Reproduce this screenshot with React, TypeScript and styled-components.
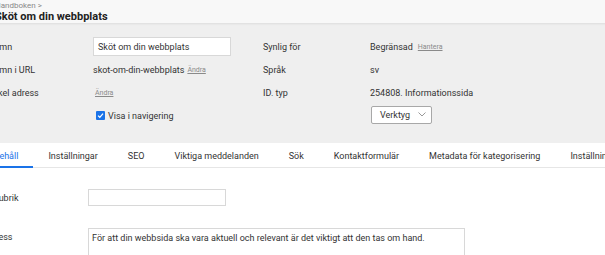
import React from "react";
import styled, { createGlobalStyle } from "styled-components";

const Global = createGlobalStyle`
  html, body { margin: 0; padding: 0; background: #ffffff; overflow: hidden; }
  body { font-family: Roboto, "Liberation Sans", sans-serif; color: #333; }
`;

const Viewport = styled.div`
  width: 605px;
  height: 255px;
  overflow: hidden;
  background: #fff;
`;

const Page = styled.div`
  width: 700px;
  margin-left: -40px;
`;

const Header = styled.header`
  height: 23px;
  padding-left: 35px;
  background: #f8f8f8;
  box-shadow: 0 1px 2px rgba(0, 0, 0, 0.08);
  position: relative;
  z-index: 1;
  display: flex;
  flex-direction: column;
`;

const Crumb = styled.div`
  font-size: 8px;
  line-height: 10px;
  color: #888;
  margin-top: 1px;
`;

const Title = styled.h1`
  margin: 0;
  font-size: 11px;
  line-height: 11px;
  font-weight: 700;
  color: #222;
`;

const Panel = styled.section`
  background: #efefef;
  height: 120px;
  padding: 12px 0 0 28px;
  box-sizing: border-box;
  display: grid;
  grid-template-columns: 105px 170px 107px 1fr;
  grid-auto-rows: 23px;
  align-items: center;
  font-size: 9px;
`;

const Label = styled.div`
  color: #333;
`;

const Value = styled.div`
  display: flex;
  align-items: center;
  gap: 3px;
  color: #333;
  white-space: nowrap;
`;

const TextInput = styled.div<{ $w: number; $h: number }>`
  width: ${(p) => p.$w}px;
  height: ${(p) => p.$h}px;
  box-sizing: border-box;
  border: 1px solid #d8d8d8;
  background: #fff;
  padding: 0 4px;
  display: flex;
  align-items: center;
  font-size: 9px;
  color: #333;
`;

const Link = styled.a<{ $tight?: boolean }>`
  font-size: 7px;
  color: #8a8a8a;
  text-decoration: underline;
  margin-left: ${(p) => (p.$tight ? 0 : 2)}px;
`;

const Check = styled.span`
  width: 9px;
  height: 9px;
  border-radius: 1px;
  background: #1a73e8;
  display: inline-flex;
  align-items: center;
  justify-content: center;
  margin-left: 3px;
`;

const Select = styled.div`
  width: 61px;
  height: 18px;
  box-sizing: border-box;
  border: 1px solid #a8a8a8;
  border-radius: 2px;
  background: #fff;
  display: flex;
  align-items: center;
  justify-content: space-between;
  padding: 0 5px 0 8px;
  margin-left: 1px;
  margin-top: -2px;
  font-size: 9px;
  color: #333;
`;

const Tabs = styled.nav`
  display: flex;
  padding-left: 12px;
  height: 25px;
  border-bottom: 1px solid #e6e6e6;
  background: #fff;
  font-size: 9px;
  box-sizing: border-box;
`;

const Tab = styled.div<{ $active?: boolean }>`
  padding: 0 15px;
  display: flex;
  align-items: center;
  white-space: nowrap;
  color: ${(p) => (p.$active ? "#1a73e8" : "#333")};
  border-bottom: 2px solid ${(p) => (p.$active ? "#1a73e8" : "transparent")};
  margin-bottom: -1px;
  padding-top: 2px;
`;

const Content = styled.section`
  padding: 21px 0 0 23px;
  display: grid;
  grid-template-columns: 105px 1fr;
  row-gap: 22px;
  font-size: 9px;
`;

const FieldLabel = styled.div<{ $top: number }>`
  padding-top: ${(p) => p.$top}px;
`;

const Area = styled.div`
  width: 377px;
  height: 40px;
  box-sizing: border-box;
  border: 1px solid #d8d8d8;
  padding: 4px 3px;
  font-size: 9px;
  color: #333;
`;

const tabs = [
  "Innehåll",
  "Inställningar",
  "SEO",
  "Viktiga meddelanden",
  "Sök",
  "Kontaktformulär",
  "Metadata för kategorisering",
  "Inställningar",
];

export default function App() {
  return (
    <Viewport>
      <Global />
      <Page>
        <Header>
          <Crumb>Handboken &gt;</Crumb>
          <Title>Sköt om din webbplats</Title>
        </Header>
        <Panel>
          <Label>Namn</Label>
          <Value>
            <TextInput $w={138} $h={19}>Sköt om din webbplats</TextInput>
          </Value>
          <Label>Synlig för</Label>
          <Value>
            Begränsad <Link>Hantera</Link>
          </Value>

          <Label>Namn i URL</Label>
          <Value>
            skot-om-din-webbplats<Link $tight>Ändra</Link>
          </Value>
          <Label>Språk</Label>
          <Value>sv</Value>

          <Label>Enkel adress</Label>
          <Value>
            <Link>Ändra</Link>
          </Value>
          <Label>ID. typ</Label>
          <Value>254808. Informationssida</Value>

          <Label />
          <Value>
            <Check>
              <svg width="7" height="7" viewBox="0 0 10 10">
                <path d="M1.5 5.2 L4 7.6 L8.6 2.4" fill="none" stroke="#fff" strokeWidth="1.8" />
              </svg>
            </Check>
            Visa i navigering
          </Value>
          <Label />
          <Value>
            <Select>
              Verktyg
              <svg width="8" height="5" viewBox="0 0 8 5">
                <path d="M0.5 0.5 L4 4 L7.5 0.5" fill="none" stroke="#999" strokeWidth="1" />
              </svg>
            </Select>
          </Value>
        </Panel>
        <Tabs>
          {tabs.map((t, i) => (
            <Tab key={i} $active={i === 0}>
              {t}
            </Tab>
          ))}
        </Tabs>
        <Content>
          <FieldLabel $top={4}>Sidrubrik</FieldLabel>
          <TextInput $w={138} $h={17} />
          <FieldLabel $top={4}>Ingress</FieldLabel>
          <Area>För att din webbsida ska vara aktuell och relevant är det viktigt att den tas om hand.</Area>
        </Content>
      </Page>
    </Viewport>
  );
}
